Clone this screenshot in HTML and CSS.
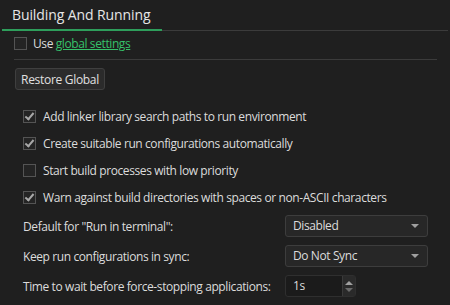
FILE: index.html
```html
<!DOCTYPE html>
<html>
<head>
<meta charset="utf-8">
<title>Building And Running</title>
<link rel="stylesheet" href="styles.css">
</head>
<body>
<div class="tabbar">
  <div class="tab">Building And Running</div>
</div>

<div class="page">
  <label class="check use">
    <span class="box"></span>
    <span>Use <a href="#" class="link">global settings</a></span>
  </label>
  <div class="sep"></div>
  <button class="btn">Restore Global</button>

  <div class="options">
    <label class="check"><span class="box on"></span>Add linker library search paths to run environment</label>
    <label class="check"><span class="box on"></span>Create suitable run configurations automatically</label>
    <label class="check"><span class="box"></span>Start build processes with low priority</label>
    <label class="check"><span class="box on"></span>Warn against build directories with spaces or non-ASCII characters</label>

    <div class="field">
      <div class="label">Default for "Run in terminal":</div>
      <div class="combo">Disabled<span class="arrow"></span></div>
    </div>
    <div class="field">
      <div class="label">Keep run configurations in sync:</div>
      <div class="combo">Do Not Sync<span class="arrow"></span></div>
    </div>
    <div class="field">
      <div class="label">Time to wait before force-stopping applications:</div>
      <div class="spin">
        <span class="spin-val">1s</span>
        <span class="spin-btns"><span class="up"></span><span class="down"></span></span>
      </div>
    </div>
  </div>
</div>
</body>
</html>
```

FILE: styles.css
```css
body {
  margin: 0;
  background: #1f1f1f;
  color: #dcdcdc;
  font-family: "Open Sans", sans-serif;
  font-size: 12px;
  letter-spacing: -0.4px;
}

.tabbar {
  display: flex;
  height: 30px;
  margin: 0 2px;
  border-bottom: 1px solid #3b3b3b;
}

.tab {
  width: 150px;
  height: 29px;
  padding-left: 10px;
  line-height: 30px;
  font-size: 14px;
  letter-spacing: -0.1px;
  color: #e6e6e6;
  border-bottom: 2px solid #2e9e5b;
  margin-bottom: -1px;
}

.page {
  padding: 6px 13px 0 14px;
}

.check {
  display: flex;
  align-items: center;
  height: 13px;
  white-space: nowrap;
}

.box {
  flex: none;
  width: 11px;
  height: 11px;
  border: 1px solid #545454;
  background: #242424;
  margin-right: 7px;
  position: relative;
}

.box.on::after {
  content: "";
  position: absolute;
  left: 3px;
  top: 0px;
  width: 3px;
  height: 7px;
  border: solid #a8a8a8;
  border-width: 0 2px 2px 0;
  transform: rotate(40deg);
}

.use .box {
  margin-right: 6px;
}

.link {
  color: #36c26a;
}

.sep {
  height: 1px;
  background: #3b3b3b;
  margin: 9px 0 8px 0;
}

.btn {
  width: 90px;
  height: 22px;
  margin-left: 1px;
  padding: 0;
  background: #2b2b2b;
  border: 1px solid #3f3f3f;
  border-radius: 3px;
  color: #e0e0e0;
  font-family: inherit;
  font-size: 12px;
  letter-spacing: -0.3px;
}

.options {
  padding-left: 9px;
  margin-top: 20px;
  display: flex;
  flex-direction: column;
  gap: 14px;
}

.field {
  display: flex;
  align-items: center;
  height: 22px;
}

.options .field:first-of-type {
  margin-top: -3px;
}

.field + .field {
  margin-top: -6px;
}

.label {
  width: 262px;
  white-space: nowrap;
}

.combo {
  position: relative;
  width: 134px;
  height: 20px;
  padding-left: 7px;
  line-height: 20px;
  background: #272727;
  border: 1px solid #3d3d3d;
  border-radius: 3px;
}

.arrow {
  position: absolute;
  right: 8px;
  top: 8px;
  border-left: 4px solid transparent;
  border-right: 4px solid transparent;
  border-top: 4px solid #a0a0a0;
}

.spin {
  display: flex;
  width: 69px;
  height: 20px;
  background: #1b1b1b;
  border: 1px solid #2f2f2f;
  border-radius: 3px;
}

.spin-val {
  flex: 1;
  padding-left: 7px;
  line-height: 20px;
}

.spin-btns {
  width: 12px;
  display: flex;
  flex-direction: column;
  align-items: center;
  justify-content: center;
  gap: 3px;
  background: #2a2a2a;
  border-left: 1px solid #3a3a3a;
}

.up {
  border-left: 4px solid transparent;
  border-right: 4px solid transparent;
  border-bottom: 4px solid #a0a0a0;
}

.down {
  border-left: 4px solid transparent;
  border-right: 4px solid transparent;
  border-top: 4px solid #6a6a6a;
}
```
